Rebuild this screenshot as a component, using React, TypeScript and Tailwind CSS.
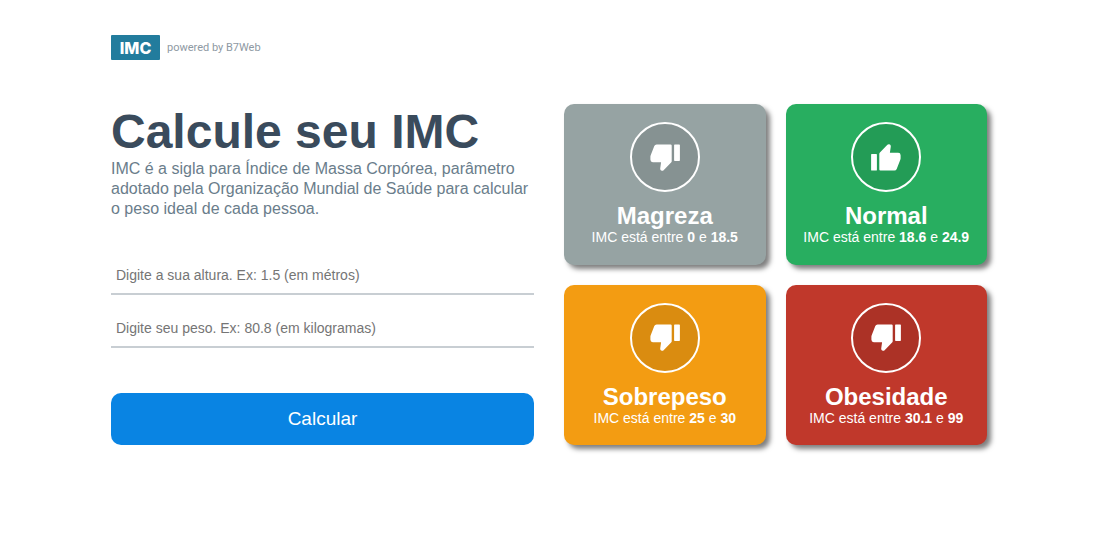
import { useState } from "react";

type Level = {
  title: string;
  min: string;
  max: string;
  icon: "up" | "down";
  color: string;
};

const levels: Level[] = [
  { title: "Magreza", min: "0", max: "18.5", icon: "down", color: "bg-[#96a3a3]" },
  { title: "Normal", min: "18.6", max: "24.9", icon: "up", color: "bg-[#28ae60]" },
  { title: "Sobrepeso", min: "25", max: "30", icon: "down", color: "bg-[#f39c12]" },
  { title: "Obesidade", min: "30.1", max: "99", icon: "down", color: "bg-[#c0382b]" },
];

function Thumb({ up }: { up: boolean }) {
  return (
    <svg
      viewBox="0 0 30 27"
      className={up ? "w-[30px] rotate-180" : "w-[30px]"}
      fill="currentColor"
      aria-hidden="true"
    >
      <path d="M6.6 .4H20.6Q21.7 .4 21.7 1.5V17.2Q21.7 18 21.1 18.6L13.6 26.2Q12.8 27 11.7 26.7Q10 26.2 10.2 24.4L11.1 18.2H2.8Q.4 18.2 .4 15.8V12.8Q.4 12 .7 11.2L4.3 2Q4.9 .4 6.6 .4Z" />
      <path d="M24.8 .4H29.2Q29.9 .4 29.9 1.1V16.2Q29.9 16.9 29.2 16.9H24.8Q24.1 16.9 24.1 16.2V1.1Q24.1 .4 24.8 .4Z" />
    </svg>
  );
}

function LevelCard({ level }: { level: Level }) {
  return (
    <article
      className={`flex flex-col items-center justify-center rounded-[10px] px-2 text-center text-white shadow-[4px_4px_5px_rgba(0,0,0,0.5)] ${level.color}`}
    >
      <div className="flex size-[70px] items-center justify-center rounded-full border-2 border-white bg-black/10">
        <Thumb up={level.icon === "up"} />
      </div>
      <h2 className="mt-[10px] text-2xl leading-[27px] font-bold">{level.title}</h2>
      <p className="text-sm leading-[17px]">
        IMC está entre <strong>{level.min}</strong> e <strong>{level.max}</strong>
      </p>
    </article>
  );
}

const fieldClass =
  "block w-full border-b-2 border-[#c8ced3] bg-transparent px-[5px] pt-[11px] pb-[9px] text-sm leading-[17px] text-[#3a4b5c] outline-none placeholder:text-[#757575]";

export default function App() {
  const [height, setHeight] = useState("");
  const [weight, setWeight] = useState("");

  return (
    <div className="mx-auto max-w-[937px] px-5 font-['Liberation_Sans',Arial,sans-serif]">
      <header className="flex items-center gap-[7px] pt-[35px]">
        <span className="flex h-[25px] w-[49px] items-center justify-center rounded-[1px] bg-[#227c9d] font-['Inter',sans-serif] text-base font-extrabold text-white">
          IMC
        </span>
        <span className="pt-px font-['Roboto',sans-serif] text-[11px] text-[#8e99a3]">powered by B7Web</span>
      </header>

      <main className="mt-11 grid gap-[30px] pb-10 md:grid-cols-2 md:pr-[21px]">
        <section>
          <h1 className="text-5xl leading-[55px] font-bold text-[#3a4b5c]">Calcule seu IMC</h1>
          <p className="text-base leading-[20px] text-[#6a7d8b]">
            IMC é a sigla para Índice de Massa Corpórea, parâmetro adotado pela Organização Mundial de Saúde para
            calcular o peso ideal de cada pessoa.
          </p>
          <form onSubmit={(e) => e.preventDefault()}>
            <input
              type="number"
              aria-label="Altura em metros"
              placeholder="Digite a sua altura. Ex: 1.5 (em métros)"
              className={`mt-[37px] ${fieldClass}`}
              value={height}
              onChange={(e) => setHeight(e.target.value)}
            />
            <input
              type="number"
              aria-label="Peso em kilogramas"
              placeholder="Digite seu peso. Ex: 80.8 (em kilogramas)"
              className={`mt-[14px] ${fieldClass}`}
              value={weight}
              onChange={(e) => setWeight(e.target.value)}
            />
            <button
              type="submit"
              className="mt-[45px] w-full cursor-pointer rounded-[10px] bg-[#0984e3] py-[15px] text-[19px] leading-[22px] text-white"
            >
              Calcular
            </button>
          </form>
        </section>

        <section className="grid auto-rows-fr grid-cols-2 gap-5">
          {levels.map((level) => (
            <LevelCard key={level.title} level={level} />
          ))}
        </section>
      </main>
    </div>
  );
}
